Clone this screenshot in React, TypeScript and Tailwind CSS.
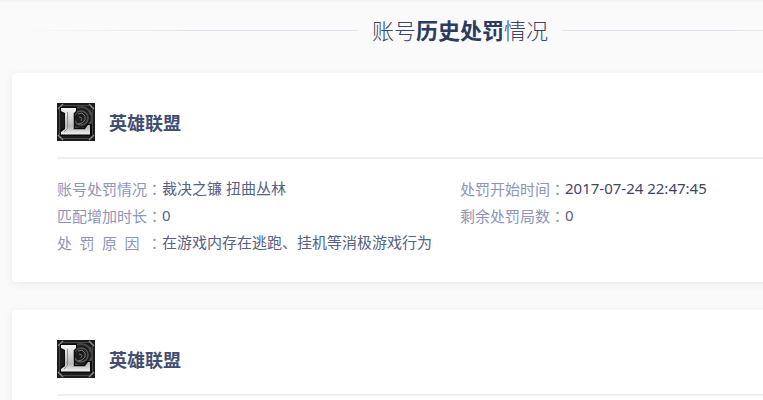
type PenaltyRecord = {
  id: number;
  game: string;
  details?: {
    penalty: string;
    startTime: string;
    extraQueueTime: string;
    remainingGames: string;
    reason: string;
  };
};

const records: PenaltyRecord[] = [
  {
    id: 1,
    game: "英雄联盟",
    details: {
      penalty: "裁决之镰 扭曲丛林",
      startTime: "2017-07-24 22:47:45",
      extraQueueTime: "0",
      remainingGames: "0",
      reason: "在游戏内存在逃跑、挂机等消极游戏行为",
    },
  },
  { id: 2, game: "英雄联盟" },
];

function LeagueIcon() {
  return (
    <svg viewBox="0 0 38 38" className="h-[38px] w-[38px] shrink-0" aria-hidden="true">
      <defs>
        <linearGradient id="metal" x1="0" y1="0" x2="0" y2="1">
          <stop offset="0" stopColor="#f4f4f4" />
          <stop offset="0.3" stopColor="#dedede" />
          <stop offset="0.7" stopColor="#b8b8b8" />
          <stop offset="1" stopColor="#f0f0f0" />
        </linearGradient>
      </defs>
      <rect width="38" height="38" fill="#1b1b1b" />
      <path d="M6 2.5h26M6 35.5h26M2.5 6v26M35.5 6v26" stroke="#484848" fill="none" />
      <path d="M1 6l5-5M32 1l5 5M1 32l5 5M32 37l5-5" stroke="#8a8a8a" strokeWidth="1.5" fill="none" />
      <g fill="none">
        <circle cx="24" cy="15" r="11" stroke="#444" strokeWidth="2" />
        <circle cx="24" cy="15" r="7" stroke="#555" strokeWidth="1.5" />
        <path d="M21 11l4-1 3 3v4l-3 3-4 1" stroke="#7a7a7a" />
        <path d="M22 14l3 1-1 3" stroke="#686868" />
        <path d="M33 7v5M34 18l-2 4" stroke="#5c5c5c" />
      </g>
      <path d="M3 4h17v5l-2 2v14h9l2-4h6v12H3v-5l4-4V11L3 9z" fill="#0b0b0b" />
      <path
        d="M4 5h15v3l-2 2v16h11l3-4h2v9.500H4V29l4-3V10L4 8z"
        fill="url(#metal)"
      />
      <path d="M10.500 9v16.500L7 29" fill="none" stroke="#8f8f8f" />
      <path d="M16.500 10v16.500h12" fill="none" stroke="#9a9a9a" />
      <path d="M5 31.500h27" stroke="#777" />
    </svg>
  );
}

type FieldProps = {
  label: string;
  value: string;
  valueClass?: string;
  className?: string;
};

function Field({ label, value, valueClass = "text-[#566184]", className = "" }: FieldProps) {
  return (
    <div className={`flex h-[27px] whitespace-nowrap ${className}`}>
      <dt className="w-[105px] text-[#8e95b8] [text-align-last:justify]">
        {label}
        <span className="font-['Noto_Sans_CJK_TC',sans-serif]">：</span>
      </dt>
      <dd className={valueClass}>{value}</dd>
    </div>
  );
}

function PenaltyCard({ game, details }: PenaltyRecord) {
  return (
    <article className="rounded-sm bg-white px-[45px] pt-[30px] pb-[26px] shadow-[0_2px_10px_rgba(0,0,0,0.07)]">
      <header className="flex items-center gap-[14px] border-b-2 border-[#efeff1] pb-4">
        <LeagueIcon />
        <h2 className="pt-0.5 text-[18px] leading-6 font-bold text-[#414d72]">{game}</h2>
      </header>
      {details && (
        <dl className="grid grid-cols-2 pt-4 text-[15px] leading-[27px]">
          <Field label="账号处罚情况" value={details.penalty} />
          <Field label="处罚开始时间" value={details.startTime} valueClass="text-[#3f4566]" />
          <Field label="匹配增加时长" value={details.extraQueueTime} />
          <Field label="剩余处罚局数" value={details.remainingGames} />
          <Field label="处 罚 原 因 " value={details.reason} className="col-span-2" />
        </dl>
      )}
    </article>
  );
}

export default function App() {
  return (
    <div className="h-screen overflow-hidden bg-[#fafafa] font-['Noto_Sans','Noto_Sans_CJK_SC',sans-serif]">
      <main className="min-w-[920px] border-t-2 border-[#f3f3f4] px-3">
        <div className="flex items-center gap-[14px] pt-3 pb-[27px]">
          <span className="h-px flex-1 bg-linear-to-r from-transparent via-[#e4e5ec] to-[#e4e5ec]" />
          <h1 className="text-[22px] leading-8 font-light text-[#3b4667]">
            账号<strong className="font-bold text-[#2d3b60]">历史处罚</strong>情况
          </h1>
          <span className="h-px flex-1 bg-linear-to-l from-transparent via-[#e4e5ec] to-[#e4e5ec]" />
        </div>
        <div className="flex flex-col gap-7">
          {records.map((record) => (
            <PenaltyCard key={record.id} {...record} />
          ))}
        </div>
      </main>
    </div>
  );
}
